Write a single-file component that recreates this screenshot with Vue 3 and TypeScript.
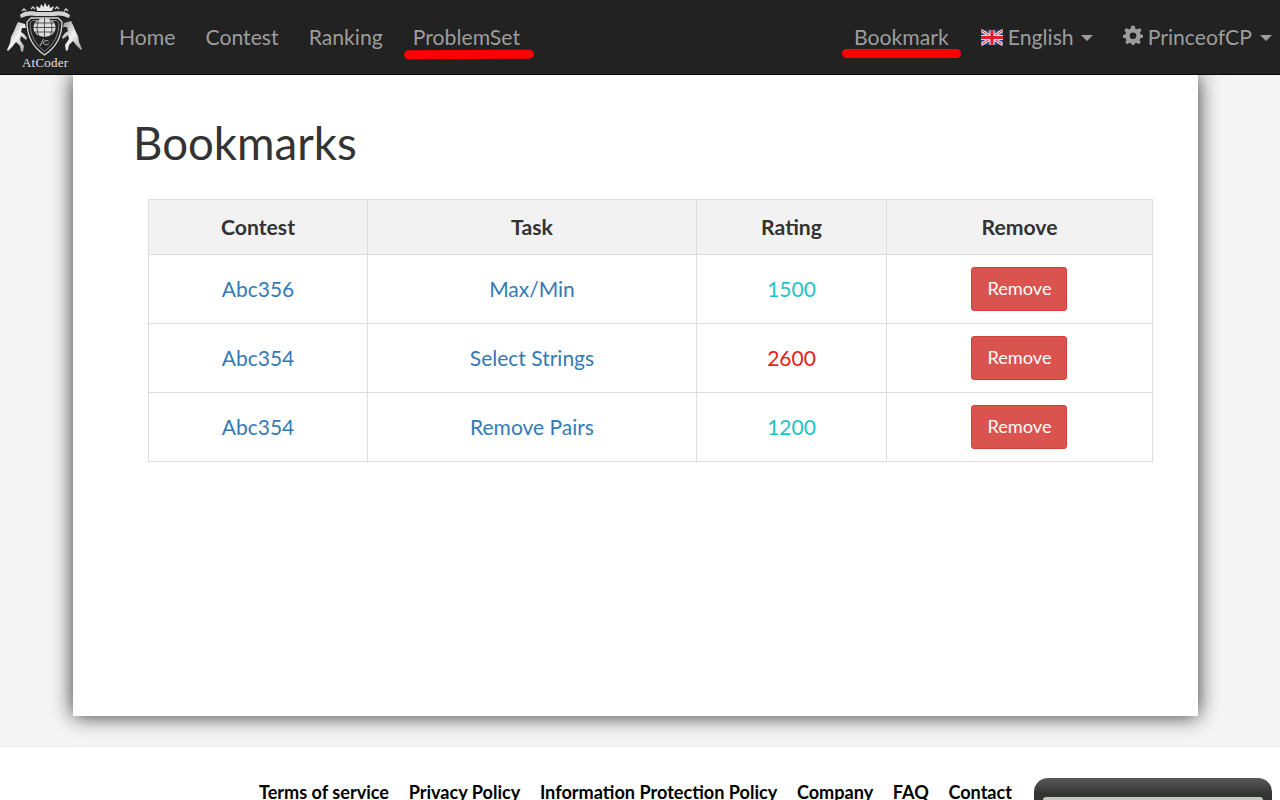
<script setup lang="ts">
interface Row { contest: string; task: string; rating: number; color: string }
const leftNav = ['Home', 'Contest', 'Ranking']
const rows: Row[] = [
  { contest: 'Abc356', task: 'Max/Min', rating: 1500, color: '#20c4c4' },
  { contest: 'Abc354', task: 'Select Strings', rating: 2600, color: '#e81c1c' },
  { contest: 'Abc354', task: 'Remove Pairs', rating: 1200, color: '#20c4c4' },
]
const footerLinks = ['Terms of service', 'Privacy Policy', 'Information Protection Policy', 'Company', 'FAQ', 'Contact']
</script>

<template>
  <div class="shell">
    <nav class="navbar">
      <a class="logo" href="#">
        <svg class="logo-art" width="90" height="58" viewBox="0 0 90 58">
          <defs>
            <linearGradient id="horse" x1="0" y1="0" x2="1" y2="1">
              <stop offset="0" stop-color="#8a8a8a" />
              <stop offset="0.5" stop-color="#f2f2f2" />
              <stop offset="1" stop-color="#9a9a9a" />
            </linearGradient>
          </defs>
          <path d="M37 11 L36 6 L40 8 L41 4 L43.5 7 L45 2.5 L47 7 L49 4 L50 8 L54 6 L52 11 Z" fill="#e6e6e6" />
          <path d="M20 15 C24 10 34 11 37 12 H52 C56 11 65 10 70 15 L69 18 C62 15 58 15 54 16 H36 C32 15 27 15 21 18 Z" fill="#d4d4d4" />
          <path d="M22 11 L24 9 L26 11 M31 9 L33 7 L35 9 M55 9 L57 7 L59 9 M64 11 L66 9 L68 11" stroke="#ccc" stroke-width="1.4" fill="none" />
          <path d="M31 18 H58 L62 22 C62 37 55 48 44.5 55 C34 48 27 37 27 22 Z" fill="#222" stroke="#d8d8d8" stroke-width="1.3" />
          <path d="M32.5 20.5 H56.5 L59 23 C59 36 53 45 44.5 51.5 C36 45 30 36 30 23 Z" fill="none" stroke="#999" stroke-width="0.8" />
          <ellipse cx="44.5" cy="27.5" rx="11" ry="9.5" fill="#dcdcdc" />
          <path d="M33.5 27.5 H55.5 M35 23 H54 M35 32 H54 M44.5 18 V37 M39 18.8 C36.5 24 36.5 31 39 36.2 M50 18.8 C52.5 24 52.5 31 50 36.2" stroke="#333" stroke-width="0.8" fill="none" />
          <path d="M40 46 L43.5 39 M43 43.5 C44 40 48 40 48.5 41.5 M43.5 43 C45 45.5 48 45 49 43.5" stroke="#ccc" stroke-width="0.9" fill="none" />
          <path fill="url(#horse)" d="M18 22 L25 24 L26 28 L22 28 L21 32 L24 34 L27 38 L26 40 L21 36 L20 40 L24 46 L23 52 L21 51 L20 46 L16 42 L12 47 L8 51 L7 50 L10 43 L11 37 L14 31 L16 26 Z" />
          <path fill="url(#horse)" d="M71 21 L64 23 L63 27 L67 27 L68 31 L65 33 L62 37 L63 39 L68 35 L69 39 L65 45 L66 51 L68 50 L69 45 L73 41 L77 46 L81 50 L82 49 L79 42 L78 36 L75 30 L73 25 Z" />
        </svg>
        <span class="logo-text">AtCoder</span>
      </a>
      <ul class="nav-list">
        <li v-for="item in leftNav" :key="item"><a href="#">{{ item }}</a></li>
        <li class="marked"><a href="#">ProblemSet</a><span class="stroke stroke-left"></span></li>
      </ul>
      <ul class="nav-list nav-right">
        <li class="marked bookmark"><a href="#">Bookmark</a><span class="stroke stroke-right"></span></li>
        <li>
          <a href="#" class="with-icon">
            <svg class="flag" width="22" height="17" viewBox="0 0 60 40">
              <rect width="60" height="40" fill="#2b4a94" />
              <path d="M0 0 L60 40 M60 0 L0 40" stroke="#fff" stroke-width="8" />
              <path d="M0 0 L60 40 M60 0 L0 40" stroke="#d8232f" stroke-width="3" />
              <path d="M30 0 V40 M0 20 H60" stroke="#fff" stroke-width="14" />
              <path d="M30 0 V40 M0 20 H60" stroke="#e0202c" stroke-width="9" />
            </svg>
            English<span class="caret"></span>
          </a>
        </li>
        <li>
          <a href="#" class="with-icon">
            <svg class="gear" width="20" height="20" viewBox="0 0 24 24">
              <path fill="#9d9d9d" fill-rule="evenodd" d="M10 1 H14 L14.7 4.3 C15.5 4.6 16.2 4.9 16.9 5.4 L19.8 3.6 L22.4 6.4 L20.4 9.1 C20.8 9.8 21 10.6 21.2 11.3 L24 12 V15 L20.9 15.8 C20.6 16.6 20.2 17.3 19.7 18 L21.4 20.8 L18.8 23 L16.1 21.2 C15.4 21.6 14.7 21.8 14 22 L13.5 24 H10.5 L10 22 C9.3 21.8 8.6 21.6 7.9 21.2 L5.2 23 L2.6 20.8 L4.3 18 C3.8 17.3 3.4 16.6 3.1 15.8 L0 15 V12 L2.8 11.3 C3 10.6 3.2 9.8 3.6 9.1 L1.6 6.4 L4.2 3.6 L7.1 5.4 C7.8 4.9 8.5 4.6 9.3 4.3 Z M12 9 A4 4 0 1 0 12 17 A4 4 0 1 0 12 9 Z" />
            </svg>
            PrinceofCP<span class="caret caret-wide"></span>
          </a>
        </li>
      </ul>
    </nav>

    <main class="page">
      <section class="card">
        <h1>Bookmarks</h1>
        <table class="table">
          <colgroup>
            <col class="c1" /><col class="c2" /><col class="c3" /><col class="c4" />
          </colgroup>
          <thead>
            <tr><th>Contest</th><th>Task</th><th>Rating</th><th>Remove</th></tr>
          </thead>
          <tbody>
            <tr v-for="(row, i) in rows" :key="i">
              <td><a href="#">{{ row.contest }}</a></td>
              <td><a href="#">{{ row.task }}</a></td>
              <td :style="{ color: row.color }">{{ row.rating }}</td>
              <td><button type="button" class="btn">Remove</button></td>
            </tr>
          </tbody>
        </table>
      </section>
    </main>

    <footer class="footer">
      <ul class="footer-links">
        <li v-for="link in footerLinks" :key="link"><a href="#">{{ link }}</a></li>
      </ul>
      <div class="device"><div class="screen"></div></div>
    </footer>
  </div>
</template>

<style>
html, body { margin: 0; overflow: hidden; background: #f5f5f5; }
</style>

<style scoped>
.shell {
  height: 800px;
  overflow: hidden;
  font-family: Lato, sans-serif;
  font-size: 21px;
  line-height: 1.43;
  color: #333;
  background: #f5f5f5;
}
a { text-decoration: none; }
ul { list-style: none; margin: 0; padding: 0; }

.navbar {
  position: relative;
  z-index: 2;
  display: flex;
  align-items: flex-start;
  height: 74px;
  background: #222;
  border-bottom: 1px solid #080808;
  font-size: 21.2px;
}
.logo {
  position: relative;
  display: block;
  width: 104px;
  height: 74px;
  flex: none;
}
.logo-art { position: absolute; left: 0; top: 0; }
.logo-text {
  position: absolute;
  left: 22px;
  top: 55px;
  font-family: "Liberation Serif", serif;
  font-size: 13px;
  line-height: 15px;
  letter-spacing: 0.2px;
  color: #e0e0e0;
}
.nav-list { display: flex; }
.nav-list li { position: relative; }
.nav-list a {
  display: block;
  padding: 22px 15px 22px;
  height: 30px;
  line-height: 30px;
  color: #9d9d9d;
}
.nav-right { margin-left: auto; margin-right: -7px; }
.nav-list .bookmark { margin-right: 2px; }
.with-icon { display: flex !important; align-items: center; white-space: nowrap; }
.flag { margin-right: 5px; }
.gear { margin-right: 5px; margin-top: -5px; }
.caret {
  width: 0;
  height: 0;
  margin-left: 7px;
  margin-top: 2px;
  border-top: 6px solid #9d9d9d;
  border-left: 6px solid transparent;
  border-right: 6px solid transparent;
}
.caret-wide { margin-left: 8px; }
.stroke {
  position: absolute;
  background: #f00;
  border-radius: 5px;
  height: 9px;
}
.stroke-left { left: 6px; top: 50px; width: 130px; transform: rotate(-0.3deg); }
.stroke-right { left: 3px; top: 49px; width: 119px; }

.page { padding-left: 73px; height: 671px; }
.card {
  box-sizing: border-box;
  width: 1125px;
  height: 641px;
  padding-left: 60px;
  background: #fff;
  box-shadow: 0 0 20px rgba(0, 0, 0, 0.8);
}
h1 {
  margin: 0;
  padding-top: 38px;
  box-sizing: border-box;
  height: 124px;
  font-size: 45.6px;
  font-weight: 400;
  line-height: 60px;
  color: #333;
}
.table {
  margin-left: 15px;
  width: 1004px;
  border-collapse: collapse;
  table-layout: fixed;
}
.c1 { width: 219px; }
.c2 { width: 329px; }
.c3 { width: 190px; }
.c4 { width: 266px; }
th, td {
  border: 1px solid #ddd;
  text-align: center;
  vertical-align: middle;
  padding: 0;
}
th { height: 54px; background: #f2f2f2; font-weight: 700; font-size: 21.2px; }
td { height: 68px; }
td a { color: #337ab7; }
.btn {
  display: block;
  margin: 0 0 0 84px;
  width: 96px;
  height: 44px;
  padding: 0 0 2px 1px;
  font-family: inherit;
  font-size: 18.2px;
  color: #fff;
  background: #d9534f;
  border: 1px solid #d43f3a;
  border-radius: 3px;
}

.footer {
  position: relative;
  height: 60px;
  background: #fff;
  border-top: 1px solid #ececec;
}
.footer-links {
  position: absolute;
  left: 259px;
  top: 31px;
  display: flex;
  gap: 19.6px;
  font-size: 18.1px;
  font-weight: 700;
  line-height: 28px;
}
.footer-links a { color: #000; white-space: nowrap; }
.device {
  position: absolute;
  left: 1034px;
  top: 31px;
  width: 238px;
  height: 60px;
  background: linear-gradient(#5a5a5c, #333 16px);
  border-radius: 14px 14px 0 0;
}
.screen {
  margin: 19px 9px 0;
  height: 41px;
  background: #c3c8c0;
  border-radius: 3px 3px 0 0;
}
</style>
